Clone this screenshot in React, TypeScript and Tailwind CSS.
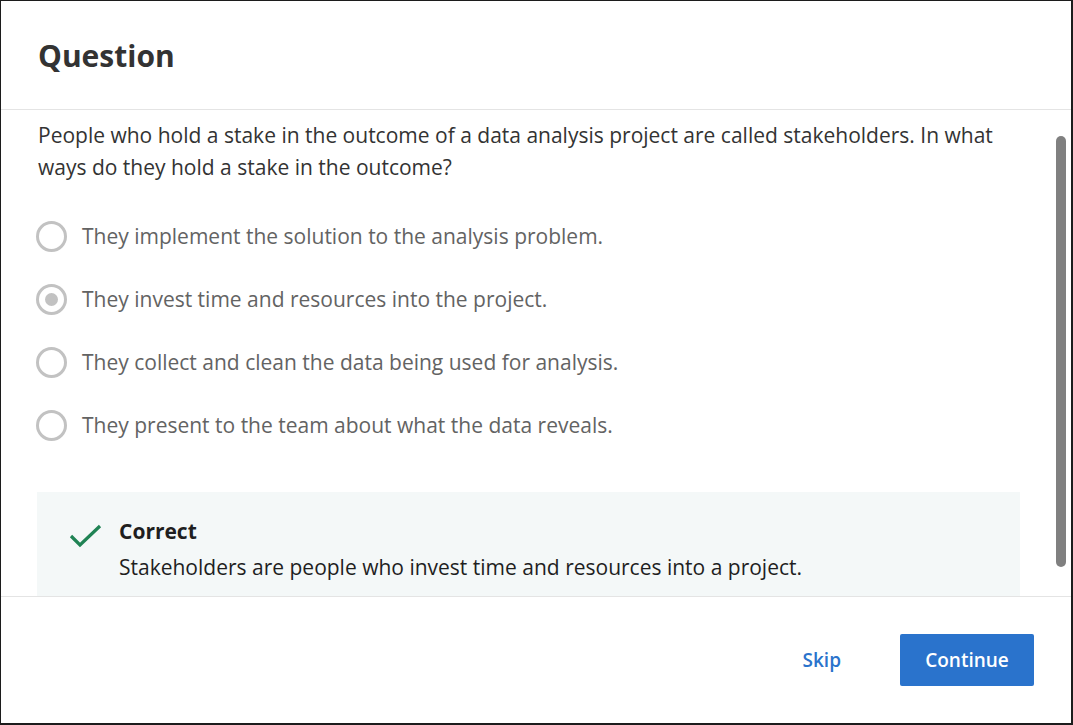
import { useState } from "react";

type Option = {
  id: number;
  text: string;
};

const options: Option[] = [
  { id: 1, text: "They implement the solution to the analysis problem." },
  { id: 2, text: "They invest time and resources into the project." },
  { id: 3, text: "They collect and clean the data being used for analysis." },
  { id: 4, text: "They present to the team about what the data reveals." },
];

const Radio = ({ checked }: { checked: boolean }) => (
  <span className="-ml-px flex h-[31px] w-[31px] shrink-0 items-center justify-center rounded-full border-[3px] border-[#c2c2c2] bg-white">
    {checked && <span className="h-[13px] w-[13px] rounded-full bg-[#c2c2c2]" />}
  </span>
);

const App = () => {
  const [selected] = useState(2);

  return (
    <div
      className="h-[725px] w-[1073px] bg-[#1c1c1c] pb-[2px] pl-px pr-[2px] pt-px"
      style={{ fontFamily: '"Open Sans", "Noto Sans", sans-serif' }}
    >
      <div className="flex h-full flex-col bg-white">
        {/* header */}
        <div className="flex h-[109px] shrink-0 items-center border-b border-[#e4e4e4] px-[37px]">
          <h1 className="text-[30px] font-bold text-[#333333]">Question</h1>
        </div>

        {/* body */}
        <div className="flex min-h-0 flex-1">
          <div className="min-w-0 flex-1 overflow-hidden pl-[36px] pr-[36px] pt-[9px]">
            <p className="pl-px text-[21px] leading-[32px] text-[#333333]">
              People who hold a stake in the outcome of a data analysis project are called stakeholders. In what
              ways do they hold a stake in the outcome?
            </p>

            <div className="mt-[22px] flex flex-col">
              {options.map((opt) => (
                <div key={opt.id} className="flex h-[63px] items-center gap-[15px]">
                  <Radio checked={selected === opt.id} />
                  <span className="text-[21px] text-[#636363]">{opt.text}</span>
                </div>
              ))}
            </div>

            <div className="mt-[35px] flex gap-[16px] bg-[#f4f8f8] pb-[24px] pl-[32px] pt-[23px]">
              <svg width="34" height="32" viewBox="0 0 34 32" className="mt-[2px] shrink-0">
                <path d="M2 19 L11 28 L31 9" fill="none" stroke="#1f8354" strokeWidth="3.2" />
              </svg>
              <div className="flex flex-col">
                <span className="text-[21px] font-bold leading-[32px] text-[#1f1f1f]">Correct</span>
                <span className="mt-[4px] text-[21px] leading-[32px] text-[#1f1f1f]">
                  Stakeholders are people who invest time and resources into a project.
                </span>
              </div>
            </div>
          </div>

          {/* scrollbar */}
          <div className="w-[15px] shrink-0 pr-[2px] pt-[26px]">
            <div className="h-[431px] w-[10px] rounded-full bg-[#808080]" />
          </div>
        </div>

        {/* footer */}
        <div className="flex h-[127px] shrink-0 items-center justify-end gap-[41px] border-t border-[#e4e4e4] pr-[37px]">
          <button className="h-[52px] px-[18px] text-[19px] font-semibold text-[#2a73cc]">Skip</button>
          <button className="h-[52px] w-[134px] rounded-[2px] bg-[#2a73cc] text-[19px] font-semibold text-white">
            Continue
          </button>
        </div>
      </div>
    </div>
  );
};

export default App;
